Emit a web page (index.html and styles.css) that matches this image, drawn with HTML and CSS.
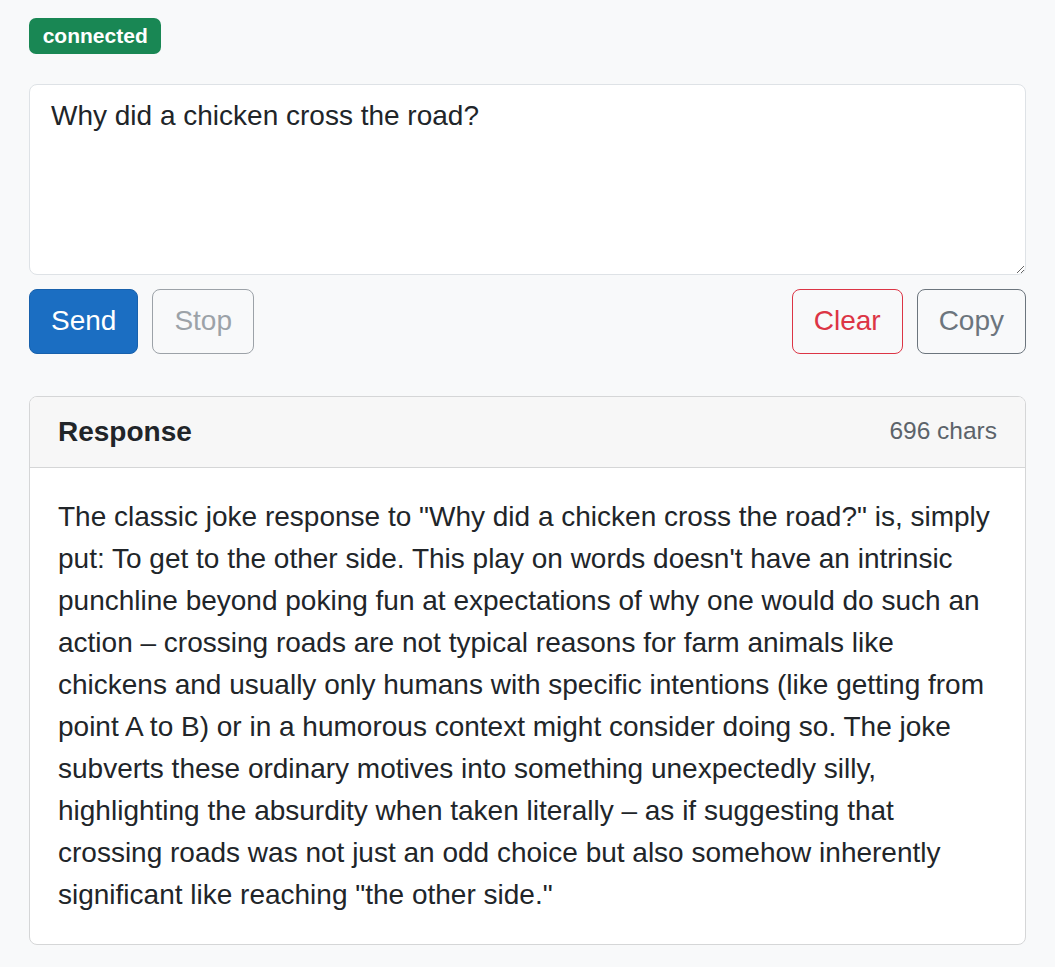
FILE: index.html
```html
<!DOCTYPE html>
<html lang="en">
<head>
<meta charset="utf-8">
<title>Chat</title>
<link rel="stylesheet" href="styles.css">
</head>
<body>
<div class="page">
  <div class="status-row"><span class="badge">connected</span></div>
  <textarea class="prompt" rows="4">Why did a chicken cross the road?</textarea>
  <div class="actions">
    <div class="group">
      <button class="btn btn-primary">Send</button>
      <button class="btn btn-outline-secondary" disabled>Stop</button>
    </div>
    <div class="group">
      <button class="btn btn-outline-danger">Clear</button>
      <button class="btn btn-outline-secondary">Copy</button>
    </div>
  </div>
  <div class="card">
    <div class="card-header">
      <strong class="title">Response</strong>
      <small class="count">696 chars</small>
    </div>
    <div class="card-body">The classic joke response to "Why did a chicken cross the road?" is, simply put: To get to the other side. This play on words doesn't have an intrinsic punchline beyond poking fun at expectations of why one would do such an action – crossing roads are not typical reasons for farm animals like chickens and usually only humans with specific intentions (like getting from point A to B) or in a humorous context might consider doing so. The joke subverts these ordinary motives into something unexpectedly silly, highlighting the absurdity when taken literally – as if suggesting that crossing roads was not just an odd choice but also somehow inherently significant like reaching "the other side."</div>
  </div>
</div>
</body>
</html>
```

FILE: styles.css
```css
html, body {
  margin: 0;
  padding: 0;
  background: #f8f9fa;
}
body {
  font-family: "Liberation Sans", Arial, sans-serif;
  font-size: 28px;
  line-height: 1.5;
  color: #212529;
}
.page {
  padding: 18px 29px 0 29px;
}
.status-row {
  display: flex;
  margin-bottom: 30px;
}
.badge {
  display: inline-block;
  background: #198754;
  color: #fff;
  font-size: 21px;
  font-weight: 700;
  line-height: 1;
  padding: 7.4px 13.7px;
  border-radius: 7px;
}
.prompt {
  display: block;
  box-sizing: border-box;
  width: 100%;
  margin: 0;
  font-family: inherit;
  font-size: 28px;
  line-height: 42px;
  height: 191px;
  padding: 10.5px 21px;
  color: #212529;
  background: #fff;
  border: 1px solid #dee2e6;
  border-radius: 8px;
  outline: none;
}
.actions {
  display: flex;
  justify-content: space-between;
  margin-top: 14px;
}
.group {
  display: flex;
  gap: 14px;
}
.btn {
  font-family: inherit;
  font-size: 28px;
  line-height: 42px;
  padding: 10.5px 21px;
  border-radius: 8px;
  border: 1px solid transparent;
  background: transparent;
  cursor: pointer;
}
.btn-primary {
  background: #1b6ec2;
  border-color: #1861ac;
  color: #fff;
}
.btn-outline-secondary {
  color: #6c757d;
  border-color: #6c757d;
}
.btn-outline-secondary:disabled {
  opacity: 0.65;
  cursor: default;
}
.btn-outline-danger {
  color: #dc3545;
  border-color: #dc3545;
}
.card {
  margin-top: 42px;
  background: #fff;
  border: 1px solid #d5d6d7;
  border-radius: 8px;
  overflow: hidden;
}
.card-header {
  display: flex;
  justify-content: space-between;
  align-items: center;
  padding: 14px 28px;
  background: #f7f7f7;
  border-bottom: 1px solid #d5d6d7;
}
.title {
  font-weight: 700;
}
.count {
  font-size: 24.5px;
  color: #5c636a;
}
.card-body {
  padding: 28px;
}
```
